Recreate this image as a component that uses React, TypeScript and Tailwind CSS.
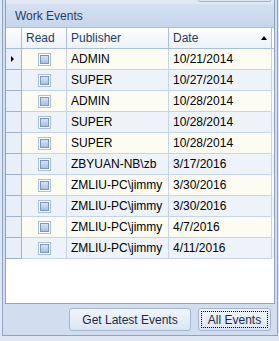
import React from "react";

type Row = { publisher: string; date: string };

const rows: Row[] = [
  { publisher: "ADMIN", date: "10/21/2014" },
  { publisher: "SUPER", date: "10/27/2014" },
  { publisher: "ADMIN", date: "10/28/2014" },
  { publisher: "SUPER", date: "10/28/2014" },
  { publisher: "SUPER", date: "10/28/2014" },
  { publisher: "ZBYUAN-NB\\zb", date: "3/17/2016" },
  { publisher: "ZMLIU-PC\\jimmy", date: "3/30/2016" },
  { publisher: "ZMLIU-PC\\jimmy", date: "3/30/2016" },
  { publisher: "ZMLIU-PC\\jimmy", date: "4/7/2016" },
  { publisher: "ZMLIU-PC\\jimmy", date: "4/11/2016" },
];

const CheckBox = () => (
  <span className="flex h-[13px] w-[13px] border border-[#a9c1df] bg-white p-[1px]">
    <span className="h-full w-full border border-[#7a97c1] bg-gradient-to-b from-[#d6e3f4] to-[#a9c1e3]" />
  </span>
);

const headCell =
  "flex items-center border-r border-[#a9bfdc] bg-gradient-to-b from-[#fdfeff] to-[#edf2f9] pl-[4px] text-[#1f3b63]";

export default function App() {
  return (
    <div className="h-[341px] w-[279px] overflow-hidden bg-[#dfe7f2] font-['Liberation_Sans',Arial,sans-serif] text-[12px] leading-none">
      {/* outer frame */}
      <div className="ml-[2px] flex h-[336px] w-[276px] flex-col border-x border-b border-[#8fa4c4] bg-[#d1deef]">
        {/* inner frame */}
        <div className="mx-[2px] flex h-[304px] flex-col border-x border-b border-[#8fa4c4] bg-white">
          {/* cut-off strip above */}
          <div className="h-[4px] bg-[#e2e9f3]">
            <div className="ml-[192px] h-[2px] w-[73px] rounded-b-[2px] border-x border-b border-[#a3b6d0] bg-[#dfe8f4]" />
          </div>

          {/* caption */}
          <div className="flex h-[23px] items-center bg-gradient-to-b from-[#d5e1f1] to-[#c5d5eb] pl-[9px] text-[#1e3d6c]">
            Work Events
          </div>

          {/* grid */}
          <div className="flex-1 bg-white">
            <div className="flex h-[22px] border-y border-[#a9bfdc]">
              <div className={headCell + " w-[16px] !pl-0"} />
              <div className={headCell + " w-[45px]"}>Read</div>
              <div className={headCell + " w-[102px]"}>Publisher</div>
              <div className={headCell + " w-[103px] justify-between pr-[4px]"}>
                <span>Date</span>
                <span className="h-0 w-0 border-x-[3.5px] border-b-[4px] border-x-transparent border-b-black" />
              </div>
            </div>

            {rows.map((r, i) => (
              <div
                key={i}
                className={
                  "flex h-[21px] " + (i % 2 === 0 ? "bg-[#fcfcf3]" : "bg-[#eef3fa]")
                }
              >
                <div className="flex w-[16px] items-center border-r border-b border-[#9fb3d1] bg-[#e9eff8] pl-[5px]">
                  {i === 0 && (
                    <span className="h-0 w-0 border-y-[3.5px] border-l-[3px] border-y-transparent border-l-black" />
                  )}
                </div>
                <div className="flex w-[45px] items-center justify-center border-r border-b border-[#c3d5ee]">
                  <CheckBox />
                </div>
                <div className="flex w-[102px] items-center border-r border-b border-[#c3d5ee] pl-[4px] text-black">
                  {r.publisher}
                </div>
                <div className="flex w-[103px] items-center border-r border-b border-[#c3d5ee] pl-[4px] text-black">
                  {r.date}
                </div>
              </div>
            ))}
          </div>
        </div>

        {/* button bar */}
        <div className="flex flex-1 items-start justify-end gap-[7px] pt-[4px] pr-[6px]">
          <button className="flex h-[23px] w-[122px] items-center justify-center rounded-[3px] border border-[#a3b6d0] bg-gradient-to-b from-[#f1f5fb] to-[#dbe6f3] text-[#1b2b45]">
            Get Latest Events
          </button>
          <button className="flex h-[23px] w-[73px] rounded-[3px] border border-[#a3b6d0] bg-gradient-to-b from-[#f1f5fb] to-[#dbe6f3] p-[2px] text-[#1b2b45]">
            <span className="flex h-full w-full items-center justify-center border border-dotted border-black">
              All Events
            </span>
          </button>
        </div>
      </div>
    </div>
  );
}
